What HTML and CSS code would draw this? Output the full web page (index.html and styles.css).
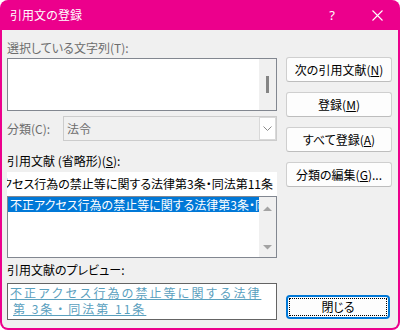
FILE: index.html
```html
<!DOCTYPE html>
<html lang="ja">
<head>
<meta charset="utf-8">
<title>引用文の登録</title>
<link rel="stylesheet" href="styles.css">
</head>
<body>
<div class="window">
  <div class="titlebar">
    <span class="title">引用文の登録</span>
    <span class="help">?</span>
    <svg class="close-x" width="11" height="11" viewBox="0 0 11 11"><path d="M0.5 0.5L10.5 10.5M10.5 0.5L0.5 10.5" stroke="#fff" stroke-width="1.1" fill="none"/></svg>
  </div>
  <div class="body">
    <div class="left">
      <div class="label disabled label-sel">選択している文字列(T):</div>
      <div class="textbox">
        <div class="textbox-inner"></div>
        <div class="vscroll"><div class="thumb"></div></div>
      </div>
      <div class="combo-row">
        <span class="label disabled combo-label">分類(C):</span>
        <div class="combo">
          <span class="combo-text">法令</span>
          <span class="combo-btn"><svg width="9" height="5" viewBox="0 0 9 5"><path d="M0.5 0.5L4.5 4.5L8.5 0.5" stroke="#8a8a8a" stroke-width="1" fill="none"/></svg></span>
        </div>
      </div>
      <div class="label label-s">引用文献 (省略形)(<u>S</u>):</div>
      <div class="edit"><span class="edit-text">不正アクセス行為の禁止等に関する法律第3条・同法第11条</span></div>
      <div class="listbox">
        <div class="list-items"><div class="item selected">不正アクセス行為の禁止等に関する法律第3条・同法第11条</div></div>
        <div class="list-scroll">
          <svg width="9" height="5" viewBox="0 0 9 5"><path d="M0 5L4.5 0.5L9 5Z" fill="#a3a3a3"/></svg>
          <svg width="9" height="5" viewBox="0 0 9 5"><path d="M0 0L4.5 4.5L9 0Z" fill="#a3a3a3"/></svg>
        </div>
      </div>
      <div class="label label-preview">引用文献のプレビュー:</div>
      <div class="preview">
        <div class="pline">不正アクセス行為の禁止等に関する法律</div>
        <div class="pline pline2">第 3条・同法第 11条</div>
      </div>
    </div>
    <div class="right">
      <div class="btn">次の引用文献(<u>N</u>)</div>
      <div class="btn">登録(<u>M</u>)</div>
      <div class="btn">すべて登録(<u>A</u>)</div>
      <div class="btn">分類の編集(<u>G</u>)...</div>
      <div class="btn btn-close"><span class="focus">閉じる</span></div>
    </div>
  </div>
</div>
</body>
</html>
```

FILE: styles.css
```css
* { box-sizing: border-box; }
html, body { margin: 0; padding: 0; background: #ffffff; }
body {
  font-family: "Noto Sans CJK JP", "Noto Sans", sans-serif;
  font-size: 12px;
  color: #000;
  font-feature-settings: "palt";
}
.window {
  width: 400px;
  height: 330px;
  background: #ec008c;
  border-radius: 8px;
  padding: 0 2px 2px 2px;
  display: flex;
  flex-direction: column;
  overflow: hidden;
}
.titlebar {
  height: 30px;
  display: flex;
  align-items: center;
  padding-left: 8px;
  color: #fff;
}
.title { flex: 1; font-size: 12px; line-height: 16px; font-feature-settings: normal; }
.help { font-size: 13px; line-height: 16px; font-family: "Noto Sans", sans-serif; margin-right: 37px; }
.close-x { margin-right: 15px; }
.body {
  flex: 1;
  background: #f0f0f0;
  border-radius: 0 0 6px 6px;
  display: flex;
  padding: 10px 0 0 5px;
  gap: 9px;
}
.left { width: 270px; display: flex; flex-direction: column; }
.label { height: 16px; line-height: 16px; white-space: nowrap; }
.disabled { color: #6d6d6d; }
.label-sel { margin-bottom: 2px; }
.textbox {
  height: 53px;
  border: 1px solid #828790;
  background: #fff;
  display: flex;
  margin-bottom: 5px;
}
.textbox-inner { flex: 1; }
.vscroll {
  width: 17px;
  background: #f0f0f0;
  display: flex;
  align-items: center;
  justify-content: center;
}
.thumb { width: 3px; height: 17px; background: #858585; }
.combo-row { height: 25px; display: flex; align-items: center; }
.combo-label { width: 56px; }
.combo {
  flex: 1;
  height: 25px;
  border: 1px solid #cccccc;
  background: #f0f0f0;
  display: flex;
  align-items: stretch;
}
.combo-text { flex: 1; color: #6d6d6d; padding-left: 3px; line-height: 23px; }
.combo-btn {
  width: 17px;
  background: #fff;
  border: 1px solid #d9d9d9;
  display: flex;
  align-items: center;
  justify-content: center;
}
.label-s { margin-top: 12px; margin-bottom: 3px; }
.edit {
  height: 24px;
  background: #fff;
  display: flex;
  justify-content: flex-end;
  align-items: center;
  overflow: hidden;
  white-space: nowrap;
  padding-right: 4px;
}
.edit-text { flex: none; line-height: 16px; }
.listbox {
  height: 62px;
  border: 1px solid #828790;
  background: #fff;
  display: flex;
}
.list-items { flex: 1; overflow: hidden; }
.item { height: 15px; line-height: 15px; white-space: nowrap; overflow: hidden; padding-left: 2px; }
.selected { background: #0078d7; color: #fff; }
.list-scroll {
  width: 17px;
  background: #f0f0f0;
  display: flex;
  flex-direction: column;
  align-items: center;
  justify-content: space-between;
  padding: 9px 0 7px;
}
.label-preview { margin-top: 4px; margin-bottom: 5px; }
.preview {
  height: 37px;
  border: 1px solid #646464;
  background: #fff;
  padding: 1px 0 0 2px;
  color: #5aa0be;
  letter-spacing: 2px;
  font-feature-settings: normal;
}
.pline { height: 16px; line-height: 16px; white-space: nowrap; text-decoration: underline; }
.pline2 { padding-left: 3px; }
.right { width: 106px; display: flex; flex-direction: column; gap: 10px; padding-top: 17px; }
.btn {
  height: 25px;
  border: 1px solid #cfcfcf;
  border-bottom-color: #bdbdbd;
  border-radius: 3px;
  background: #fdfdfd;
  display: flex;
  align-items: center;
  justify-content: center;
  white-space: nowrap;
  line-height: 16px;
}
.btn-close {
  width: 104px;
  height: 24px;
  margin-top: 98px;
  border: 2px solid #0078d7;
  border-radius: 4px;
  padding: 1px;
}
.focus {
  flex: 1;
  align-self: stretch;
  border: 1px dotted #000;
  display: flex;
  align-items: center;
  justify-content: center;
}
```
